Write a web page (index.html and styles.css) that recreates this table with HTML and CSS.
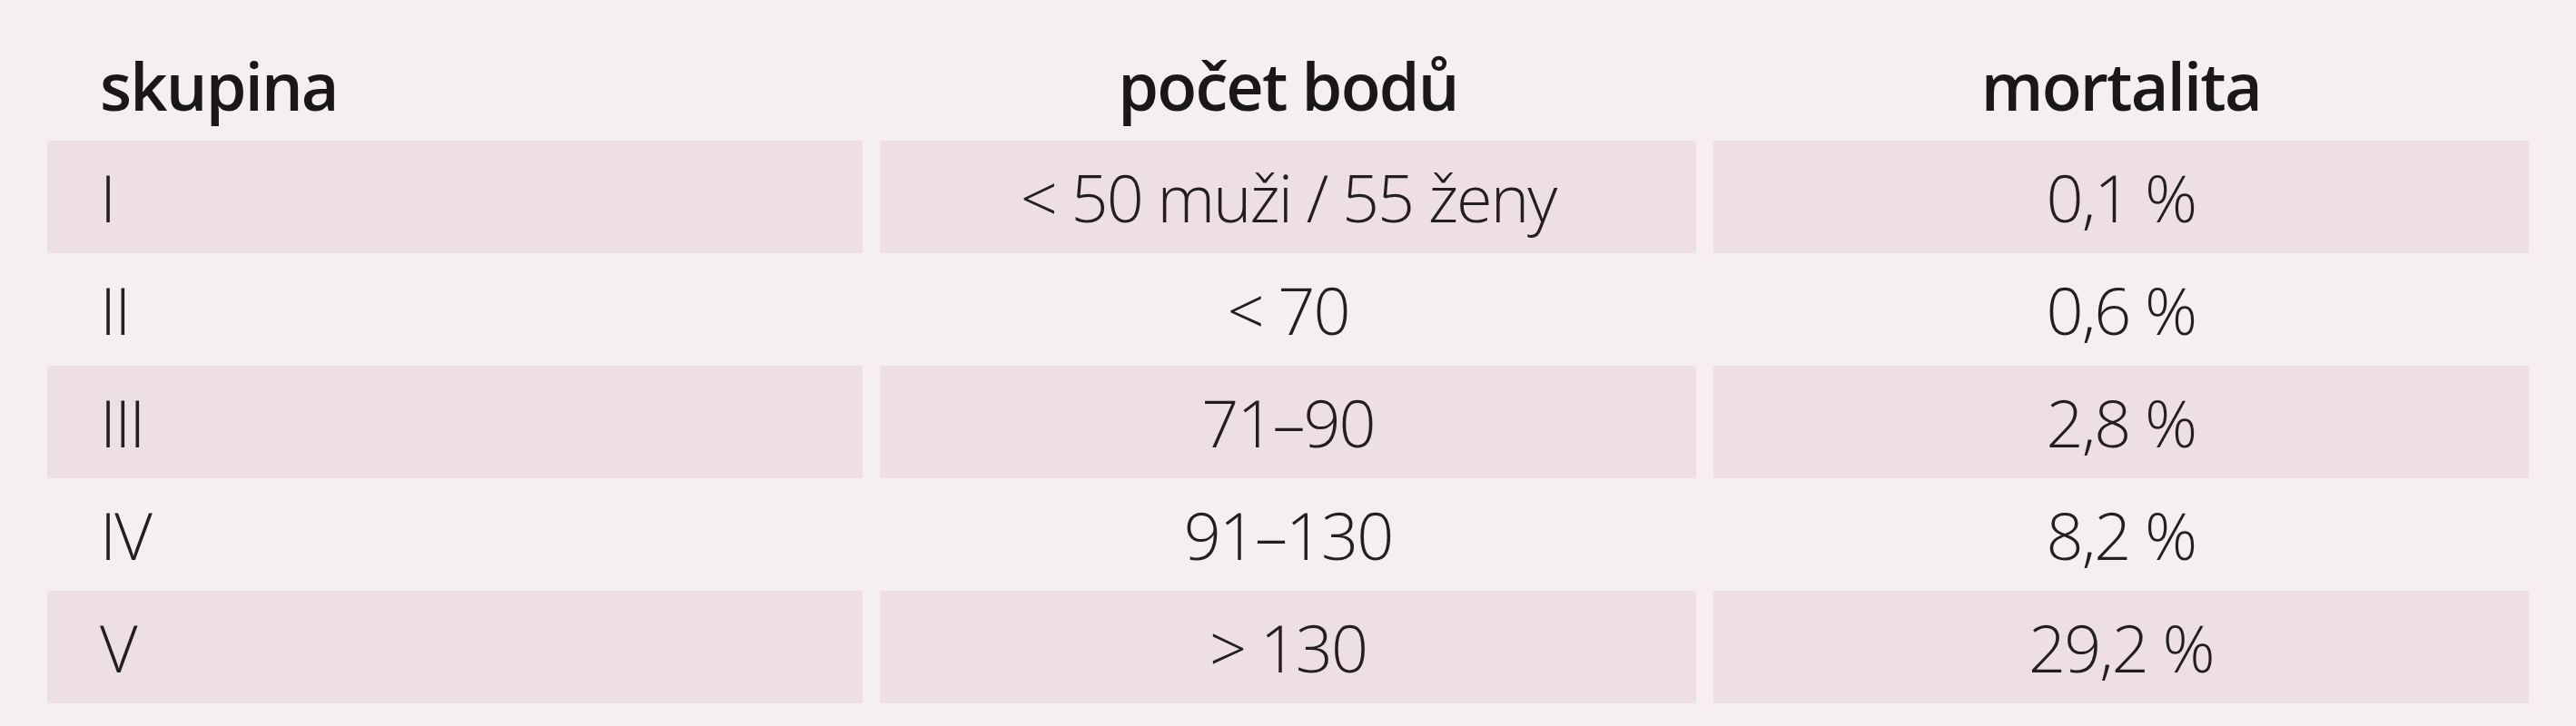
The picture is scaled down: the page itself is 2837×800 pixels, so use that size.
FILE: index.html
```html
<!DOCTYPE html>
<html lang="cs">
<head>
<meta charset="utf-8">
<title>Skupiny</title>
<link rel="stylesheet" href="styles.css">
</head>
<body>
<div class="table">
  <div class="th first">skupina</div>
  <div class="th">počet bodů</div>
  <div class="th">mortalita</div>

  <div class="td first shade">I</div>
  <div class="td shade">&lt; 50 muži / 55 ženy</div>
  <div class="td shade">0,1 %</div>

  <div class="td first">II</div>
  <div class="td">&lt; 70</div>
  <div class="td">0,6 %</div>

  <div class="td first shade">III</div>
  <div class="td shade">71–90</div>
  <div class="td shade">2,8 %</div>

  <div class="td first">IV</div>
  <div class="td">91–130</div>
  <div class="td">8,2 %</div>

  <div class="td first shade">V</div>
  <div class="td shade">&gt; 130</div>
  <div class="td shade">29,2 %</div>
</div>
</body>
</html>
```
FILE: styles.css
```css
html, body {
  margin: 0;
  padding: 0;
  background: #f6eff2;
}
body {
  width: 2837px;
  height: 800px;
  overflow: hidden;
  font-family: "Open Sans", "Liberation Sans", sans-serif;
  color: #231f20;
}
.table {
  display: grid;
  grid-template-columns: repeat(3, 1fr);
  column-gap: 19px;
  padding: 0 52px;
}
.th {
  height: 155px;
  box-sizing: border-box;
  padding-top: 58px;
  font-size: 72px;
  line-height: 72px;
  font-weight: 600;
  letter-spacing: -1.8px;
  text-align: center;
  color: #1a1718;
}
.td {
  height: 124px;
  display: flex;
  align-items: center;
  justify-content: center;
  font-size: 72px;
  line-height: 72px;
  font-weight: 300;
  letter-spacing: -2px;
}
.first {
  justify-content: flex-start;
  text-align: left;
  padding-left: 58px;
}
.shade {
  background: #eedfe6;
}
```
